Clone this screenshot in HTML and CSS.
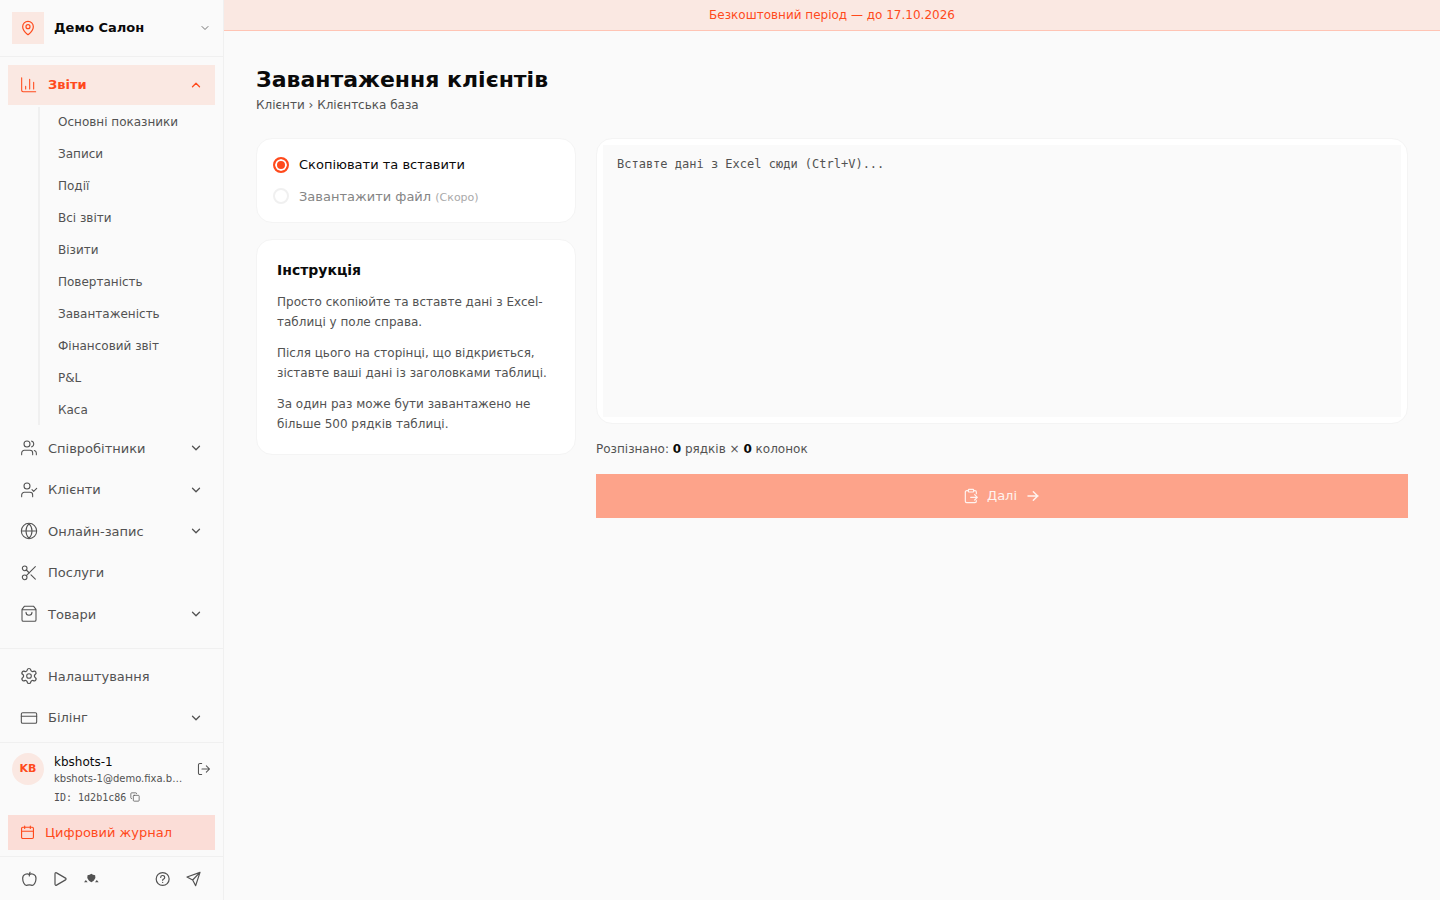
FILE: index.html
```html
<!DOCTYPE html>
<html lang="uk">
<head>
<meta charset="utf-8">
<meta name="viewport" content="width=device-width, initial-scale=1">
<title>Завантаження клієнтів</title>
<link rel="stylesheet" href="styles.css">
</head>
<body>
<svg class="sprite" aria-hidden="true">
  <symbol id="down" viewBox="0 0 24 24"><path d="m6 9 6 6 6-6"/></symbol>
  <symbol id="up" viewBox="0 0 24 24"><path d="m18 15-6-6-6 6"/></symbol>
</svg>
<div class="app">
  <aside class="sidebar">
    <button class="salon" type="button">
      <span class="salon-logo"><svg class="icon icon-16" viewBox="0 0 24 24"><path d="M20 10c0 4.99-5.54 10.19-7.4 11.8a1 1 0 0 1-1.2 0C9.54 20.19 4 14.99 4 10a8 8 0 0 1 16 0"/><circle cx="12" cy="10" r="3"/></svg></span>
      <span class="salon-name">Демо Салон</span>
      <svg class="icon icon-12 muted"><use href="#down"/></svg>
    </button>

    <nav class="nav">
      <button class="item active" type="button" aria-expanded="true">
        <svg class="icon icon-18" viewBox="0 0 24 24"><path d="M1 1v19a2 2 0 0 0 2 2h19M7 14v4M13 3.500V18M19 8v10"/></svg>
        <span>Звіти</span><svg class="icon chevron"><use href="#up"/></svg>
      </button>
      <div class="submenu">
        <a href="#">Основні показники</a>
        <a href="#">Записи</a>
        <a href="#">Події</a>
        <a href="#">Всі звіти</a>
        <a href="#">Візити</a>
        <a href="#">Повертаність</a>
        <a href="#">Завантаженість</a>
        <a href="#">Фінансовий звіт</a>
        <a href="#">P&amp;L</a>
        <a href="#">Каса</a>
      </div>
      <button class="item" type="button">
        <svg class="icon icon-18" viewBox="0 0 24 24"><circle cx="9" cy="6" r="4.500"/><path d="M1 22v-2.500a4 4 0 0 1 4-4h8.500a4 4 0 0 1 4 4V22M16 1.700a4.500 4.500 0 0 1 0 8.600M20 15.700a4 4 0 0 1 3 3.800V22"/></svg>
        <span>Співробітники</span><svg class="icon chevron"><use href="#down"/></svg>
      </button>
      <button class="item" type="button">
        <svg class="icon icon-18" viewBox="0 0 24 24"><circle cx="9" cy="6" r="4.500"/><path d="M1 22v-2.500a4 4 0 0 1 4-4h8.500a4 4 0 0 1 4 4V22m-1-10.500 2.500 2.500 4.500-4.500"/></svg>
        <span>Клієнти</span><svg class="icon chevron"><use href="#down"/></svg>
      </button>
      <button class="item" type="button">
        <svg class="icon icon-18" viewBox="0 0 24 24"><circle cx="12" cy="12" r="11.500"/><path d="M1 12h22M12 1c-6 6-6 16 0 22 6-6 6-16 0-22"/></svg>
        <span>Онлайн-запис</span><svg class="icon chevron"><use href="#down"/></svg>
      </button>
      <button class="item" type="button">
        <svg class="icon icon-18" viewBox="0 0 24 24"><circle cx="5.500" cy="5" r="3.500"/><circle cx="5.500" cy="18.500" r="3.500"/><path d="M21.500 2.500 8 16M8 7.500l4.500 4.500M15 14.800l6.500 6.500"/></svg>
        <span>Послуги</span>
      </button>
      <button class="item" type="button">
        <svg class="icon icon-18" viewBox="0 0 24 24"><path d="M5 .5h14L22.500 5v16a2 2 0 0 1-2 2h-17a2 2 0 0 1-2-2V5zM1.500 5.500h21M16.500 9.500a4.500 4.500 0 0 1-9 0"/></svg>
        <span>Товари</span><svg class="icon chevron"><use href="#down"/></svg>
      </button>
    </nav>

    <nav class="nav-bottom">
      <button class="item" type="button">
        <svg class="icon icon-18" viewBox="0 0 24 24"><path d="M9.700 4.100a2.350 2.350 0 0 1 4.600 0 2.350 2.350 0 0 0 3.300 1.900 2.350 2.350 0 0 1 2.400 4.100 2.350 2.350 0 0 0 0 3.800 2.350 2.350 0 0 1-2.400 4.100 2.350 2.350 0 0 0-3.300 1.900 2.350 2.350 0 0 1-4.600 0A2.350 2.350 0 0 0 6.400 18 2.350 2.350 0 0 1 4 13.900a2.350 2.350 0 0 0 0-3.800A2.350 2.350 0 0 1 6.400 6a2.350 2.350 0 0 0 3.300-1.900" transform="translate(-1.800 -1.800) scale(1.150)"/><circle cx="12" cy="12" r="3.500"/></svg>
        <span>Налаштування</span>
      </button>
      <button class="item" type="button">
        <svg class="icon icon-18" viewBox="0 0 24 24"><rect x=".5" y="4" width="23" height="16" rx="2"/><path d="M.5 9.500h23"/></svg>
        <span>Білінг</span><svg class="icon chevron"><use href="#down"/></svg>
      </button>
    </nav>

    <section class="account">
      <div class="user">
        <span class="avatar">KB</span>
        <div class="user-info">
          <span class="user-name">kbshots-1</span>
          <span class="user-mail">kbshots-1@demo.fixa.b…</span>
          <button class="user-id" type="button">ID: 1d2b1c86 <svg class="icon icon-10" viewBox="0 0 24 24"><rect x="8" y="8" width="14" height="14" rx="2"/><path d="M4 16a2 2 0 0 1-2-2V4a2 2 0 0 1 2-2h10a2 2 0 0 1 2 2"/></svg></button>
        </div>
        <button class="logout" type="button" aria-label="Вийти"><svg class="icon icon-14" viewBox="0 0 24 24"><path d="M8 2.500H5a2.500 2.500 0 0 0-2.500 2.500v14A2.500 2.500 0 0 0 5 21.500h3M8.500 12H21M16 6.500l5.500 5.500-5.500 5.500"/></svg></button>
      </div>
      <a class="journal" href="#"><svg class="icon icon-15" viewBox="0 0 24 24"><path d="M7.500 1.500v4M16.500 1.500v4M2.500 10h19"/><rect x="2.500" y="3.500" width="19" height="18" rx="2"/></svg>Цифровий журнал</a>
    </section>

    <footer class="tools">
      <a href="#" aria-label="App Store"><svg class="icon icon-16" viewBox="0 0 24 24"><path d="M12.500 5.500C10 3.500 2.500 4 2.500 11c0 5 2.500 10.500 5.500 10.500 1.500 0 2-.8 4.500-.8s3 .8 4.500.8c3 0 5.500-5.500 5.500-10.500 0-7-7.500-7.500-10-5.500zM12.500 7.500c0-2.500 0-4 1-5.500"/></svg></a>
      <a href="#" aria-label="Google Play"><svg class="icon icon-16" viewBox="0 0 24 24"><path d="M4.500 4v16a1.500 1.500 0 0 0 2.300 1.200l13.500-7.900a1.500 1.500 0 0 0 0-2.600L6.800 2.800A1.500 1.500 0 0 0 4.500 4z"/></svg></a>
      <a href="#" aria-label="AppGallery"><svg class="icon icon-16 solid" viewBox="0 0 24 24"><path d="m12.500 4 2.500 1.800 3.200.4.400 4.300-2.600 4-3.500 2.500L9 14.500l-2.600-4 .4-4.300 3.200-.4zM1.500 17l2.800-3.500L7 17zM23.500 17l-2.800-3.500L18 17z"/></svg></a>
      <a class="push" href="#" aria-label="Допомога"><svg class="icon icon-16" viewBox="0 0 24 24"><circle cx="11.500" cy="12" r="9.700"/><path d="M8.500 9.500a3 3 0 0 1 6 .5c0 2-3 2.200-3 4M11.500 17v.1"/></svg></a>
      <a href="#" aria-label="Telegram"><svg class="icon icon-16" viewBox="0 0 24 24"><path d="M21 2 1.500 9l8.500 4.500L14.500 22zM21 2 10 13.500"/></svg></a>
    </footer>
  </aside>

  <div class="page">
    <div class="banner">Безкоштовний період — до 17.10.2026</div>
    <main class="content">
      <header class="heading">
        <h1>Завантаження клієнтів</h1>
        <p>Клієнти › Клієнтська база</p>
      </header>
      <div class="columns">
        <div class="side">
          <section class="card modes">
            <label class="mode"><input type="radio" name="mode" checked><span>Скопіювати та вставити</span></label>
            <label class="mode disabled"><input type="radio" name="mode" disabled><span>Завантажити файл <small>(Скоро)</small></span></label>
          </section>
          <section class="card guide">
            <h2>Інструкція</h2>
            <p>Просто скопіюйте та вставте дані з Excel-таблиці у поле справа.</p>
            <p>Після цього на сторінці, що відкриється, зіставте ваші дані із заголовками таблиці.</p>
            <p>За один раз може бути завантажено не більше 500 рядків таблиці.</p>
          </section>
        </div>
        <form class="import">
          <div class="card paste"><textarea aria-label="Дані з Excel" placeholder="Вставте дані з Excel сюди (Ctrl+V)..."></textarea></div>
          <p class="count">Розпізнано: <b>0</b> рядків × <b>0</b> колонок</p>
          <button class="next" type="submit" disabled>
            <svg class="icon icon-16" viewBox="0 0 24 24"><rect x="8" y="2" width="8" height="4" rx="1"/><path d="M16 4h2a2 2 0 0 1 2 2v2.500M8 4H5.500a2 2 0 0 0-2 2v14a2 2 0 0 0 2 2H18a2 2 0 0 0 2-2v-1M11.500 14H21M17.500 10l4 4-4 4"/></svg>
            Далі
            <svg class="icon icon-16 bold" viewBox="0 0 24 24"><path d="M4.500 12h15M12.500 5.500l6.500 6.500-6.500 6.500"/></svg>
          </button>
        </form>
      </div>
    </main>
  </div>
</div>
</body>
</html>
```
FILE: styles.css
```css
:root {
  --accent: #ff4a1c;
  --tint: #fae8e2;
  --bg: #fafafa;
  --line: #f0f0f0;
  --text: #0a0a0a;
  --soft: #525252;
}
* { box-sizing: border-box; margin: 0; }
body {
  background: var(--bg);
  color: var(--text);
  font: 13px/1.5 "DejaVu Sans", sans-serif;
}
button, input, textarea { font: inherit; color: inherit; }
button { border: 0; padding: 0; background: none; cursor: pointer; text-align: left; }
a { color: inherit; text-decoration: none; }

.sprite { display: none; }
.icon {
  flex: none;
  display: block;
  fill: none;
  stroke: currentColor;
  stroke-width: 1.8;
  stroke-linecap: round;
  stroke-linejoin: round;
}
.icon-10 { width: 10px; height: 10px; }
.icon-12 { width: 12px; height: 12px; }
.icon-14 { width: 14px; height: 14px; }
.icon-15 { width: 15px; height: 15px; }
.icon-16 { width: 16px; height: 16px; }
.icon-18 { width: 18px; height: 18px; padding: 1px; overflow: visible; stroke-width: 1.6; }
.chevron { width: 14px; height: 14px; margin-left: auto; stroke-width: 2.2; }
.muted { color: #737373; stroke-width: 2; }
.bold { stroke-width: 2.2; }
.solid { fill: currentColor; stroke: none; }

.app { display: flex; min-height: 100vh; }
.sidebar {
  flex: none;
  display: flex;
  flex-direction: column;
  width: 224px;
  height: 100vh;
  border-right: 1px solid var(--line);
}
.salon {
  display: flex;
  align-items: center;
  gap: 10px;
  padding: 12px;
  border-bottom: 1px solid var(--line);
  font-weight: 700;
}
.salon-logo {
  display: grid;
  place-items: center;
  width: 32px;
  height: 32px;
  background: var(--tint);
  color: var(--accent);
}
.salon-name { flex: 1; }

.nav, .nav-bottom { display: flex; flex-direction: column; gap: 2px; padding: 8px; }
.nav { flex: 1; min-height: 0; overflow: hidden; }
.nav-bottom { padding-bottom: 4px; border-top: 1px solid var(--line); }
.item {
  flex: none;
  display: flex;
  align-items: center;
  gap: 10px;
  padding: 10px 12px;
  color: var(--soft);
}
.item.active { background: var(--tint); color: var(--accent); font-weight: 700; }
.submenu {
  flex: none;
  display: flex;
  flex-direction: column;
  gap: 2px;
  margin: 0 0 2px 30px;
  padding-left: 6px;
  border-left: 2px solid var(--line);
  color: var(--soft);
  font-size: 12px;
}
.submenu a { padding: 6px 12px; }

.account { padding: 10px 8px 6px; border-top: 1px solid var(--line); }
.user { display: flex; gap: 10px; padding: 0 4px; }
.avatar {
  flex: none;
  display: grid;
  place-items: center;
  width: 32px;
  height: 32px;
  border-radius: 50%;
  background: var(--tint);
  color: var(--accent);
  font-size: 11px;
  font-weight: 700;
  line-height: 18px;
}
.user-info { flex: 1; min-width: 0; display: flex; flex-direction: column; color: var(--soft); font-size: 10px; }
.user-name { color: var(--text); font-size: 12px; }
.user-mail { white-space: nowrap; }
.user-id {
  display: flex;
  align-items: center;
  gap: 4px;
  margin-top: 4px;
  font-family: "DejaVu Sans Mono", monospace;
}
.logout { align-self: flex-start; padding: 9px 0 9px 4px; color: var(--soft); }
.journal {
  display: flex;
  align-items: center;
  gap: 10px;
  margin-top: 10px;
  padding: 8px 12px;
  background: #fbddd7;
  color: var(--accent);
}
.tools {
  display: flex;
  gap: 15px;
  padding: 14px 21px 13px;
  border-top: 1px solid var(--line);
  color: var(--soft);
}
.push { margin-left: auto; }

.page { flex: 1; min-width: 0; }
.banner {
  padding: 6px 16px;
  border-bottom: 1px solid #ffc4b4;
  background: var(--tint);
  color: var(--accent);
  font-size: 12px;
  text-align: center;
}
.content { padding: 32px; }
.heading { margin-bottom: 24px; }
h1 { font-size: 22px; line-height: 33px; }
.heading p { color: var(--soft); font-size: 12px; }
.columns { display: grid; grid-template-columns: 320px 1fr; gap: 20px; align-items: start; }
.side { display: grid; gap: 16px; }
.card { border: 1px solid #f4f4f4; border-radius: 16px; background: #fff; }
.modes { display: grid; gap: 12px; padding: 16px; }
.mode { display: flex; align-items: center; gap: 10px; }
.mode input {
  appearance: none;
  width: 16px;
  height: 16px;
  margin: 0;
  border: 2px solid var(--line);
  border-radius: 50%;
}
.mode input:checked {
  border-color: var(--accent);
  background: var(--accent);
  box-shadow: inset 0 0 0 2px #fff;
}
.disabled { color: #858585; }
.disabled small { color: #a9a9a9; font-size: 11px; }
.guide { display: grid; gap: 11px; padding: 20px; color: var(--soft); font-size: 12px; line-height: 20px; }
h2 { color: var(--text); font-size: 14px; line-height: 21px; }

.paste { padding: 6px; }
.paste textarea {
  display: block;
  width: 100%;
  height: 272px;
  padding: 9px 14px;
  border: 0;
  background: var(--bg);
  font: 12px/20px "DejaVu Sans Mono", monospace;
  outline: 0;
  resize: none;
}
.paste textarea::placeholder { color: var(--soft); }
.count { margin: 16px 0; color: var(--soft); font-size: 12px; }
.count b { color: var(--text); }
.next {
  display: flex;
  align-items: center;
  justify-content: center;
  gap: 8px;
  width: 100%;
  min-height: 44px;
  background: #fda38a;
  color: #fff3ef;
}
```
